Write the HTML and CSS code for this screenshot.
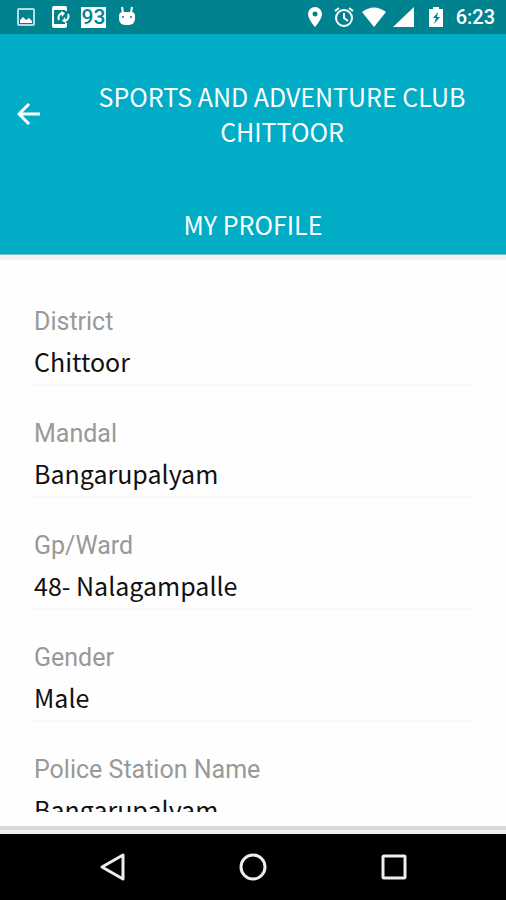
FILE: index.html
```html
<!DOCTYPE html>
<html lang="en">

<head>
<meta charset="utf-8">
<meta name="viewport" content="width=device-width, initial-scale=1">
<title>My Profile</title>
<link rel="stylesheet" href="styles.css">
</head>

<body>

<div class="status-bar">
  <div class="notifications">
    <svg class="image" width="20" height="20" viewBox="0 0 20 20">
      <rect x="2" y="2" width="16" height="16" rx="1" fill="none" stroke="#b5dce0" stroke-width="2"/>
      <path d="M4 16v-3l3-3 3 3 3-2 3 3v2z" fill="#fff"/>
    </svg>
    <svg width="20" height="24" viewBox="0 0 20 24">
      <path d="M16 6V3a1 1 0 0 0-1-1H4a1 1 0 0 0-1 1v18a1 1 0 0 0 1 1h11a1 1 0 0 0 1-1v-3" fill="none" stroke="#fff" stroke-width="2"/>
      <path d="M3 2h13v3H3zM3 19h13v3H3z" fill="#fff"/>
      <path d="M9 15a5 5 0 0 1 3-7M18 9a5 5 0 0 1-3 7" fill="none" stroke="#fff" stroke-width="2"/>
      <path d="M11 6l4 2-3 4zM16 18l-4-2 3-4z" fill="#fff"/>
    </svg>
    <span class="count">93</span>
    <svg width="20" height="24" viewBox="0 0 20 24">
      <path d="M5 2l1 6M15 2l-1 6" stroke="#fff" stroke-width="2"/>
      <path d="M2 11a4 4 0 0 1 4-4h8a4 4 0 0 1 4 4v3a6 6 0 0 1-6 6H8a6 6 0 0 1-6-6z" fill="#fff"/>
      <circle cx="6" cy="12" r="1" fill="#00838f"/>
      <circle cx="14" cy="12" r="1" fill="#00838f"/>
    </svg>
  </div>
  <div class="system">
    <svg class="pin" width="16" height="20" viewBox="0 0 16 20">
      <path fill-rule="evenodd" d="M8 0a7 7 0 0 0-7 7c0 5 7 13 7 13s7-8 7-13a7 7 0 0 0-7-7zm0 4.500a2.500 2.500 0 1 1 0 5 2.500 2.500 0 0 1 0-5z" fill="#fff"/>
    </svg>
    <svg class="alarm" width="22" height="22" viewBox="0 0 22 22">
      <circle cx="11" cy="12" r="8" fill="none" stroke="#fff" stroke-width="2"/>
      <path d="M11 7v5l4 3M2 5l4-3M20 5l-4-3" fill="none" stroke="#fff" stroke-width="2"/>
    </svg>
    <svg class="wifi" width="26" height="20" viewBox="0 0 26 20">
      <path d="M1 5Q13-4 25 5L13 20z" fill="#fff"/>
    </svg>
    <svg class="signal" width="22" height="20" viewBox="0 0 22 20">
      <path d="M21 0v20H0z" fill="#fff"/>
    </svg>
    <svg class="battery" width="14" height="20" viewBox="0 0 14 20">
      <path d="M4 0h6v2h4v18H0V2h4z" fill="#fff"/>
      <path d="M9 5l-5 6h3l-2 6 6-7H8z" fill="#00838f"/>
    </svg>
    <span class="clock">6:23</span>
  </div>
</div>

<header class="app-header">
  <div class="title-row">
    <button class="back" type="button" aria-label="Back">
      <svg width="24" height="22" viewBox="0 0 24 22">
        <path d="M23 11H2M12 1L2 11l10 10" fill="none" stroke="#fff" stroke-width="3"/>
      </svg>
    </button>
    <h1>SPORTS AND ADVENTURE CLUB CHITTOOR</h1>
  </div>
  <h2>MY PROFILE</h2>
</header>

<main class="profile">
  <dl class="fields">
    <div class="field">
      <dt>District</dt>
      <dd>Chittoor</dd>
    </div>
    <div class="field">
      <dt>Mandal</dt>
      <dd>Bangarupalyam</dd>
    </div>
    <div class="field">
      <dt>Gp/Ward</dt>
      <dd>48- Nalagampalle</dd>
    </div>
    <div class="field">
      <dt>Gender</dt>
      <dd>Male</dd>
    </div>
    <div class="field">
      <dt>Police Station Name</dt>
      <dd>Bangarupalyam</dd>
    </div>
  </dl>
</main>

<nav class="nav-bar">
  <button type="button" aria-label="Back">
    <svg width="28" height="28" viewBox="0 0 28 28">
      <path d="M25 2v24L4 14z" fill="none" stroke="#eee" stroke-width="3" stroke-linejoin="round"/>
    </svg>
  </button>
  <button type="button" aria-label="Home">
    <svg width="28" height="28" viewBox="0 0 28 28">
      <circle cx="14" cy="14" r="12" fill="none" stroke="#eee" stroke-width="3"/>
    </svg>
  </button>
  <button type="button" aria-label="Recent apps">
    <svg width="28" height="28" viewBox="0 0 28 28">
      <rect x="3" y="3" width="22" height="22" rx="1" fill="none" stroke="#eee" stroke-width="3"/>
    </svg>
  </button>
</nav>

</body>
</html>
```
FILE: styles.css
```css
* {
	box-sizing: border-box;
}

body {
	margin: 0;
	height: 100vh;
	display: flex;
	flex-direction: column;
	background: #fefefe;
	font-family: "Noto Sans CJK SC", sans-serif;
	font-size: 25px;
}

h1, h2, dl, dd {
	margin: 0;
	font-size: 25px;
	font-weight: 400;
}

button {
	padding: 0;
	border: 0;
	background: none;
}

svg {
	display: block;
}

.status-bar {
	flex: none;
	height: 34px;
	padding: 0 11px 0 16px;
	display: flex;
	justify-content: space-between;
	align-items: center;
	background: #00838f;
	color: #fff;
	font-family: Roboto, sans-serif;
}

.notifications, .system {
	display: flex;
	align-items: center;
}

.notifications {
	gap: 11px;
}

.image {
	margin-right: 3px;
}

.system {
	gap: 6px;
}

.pin {
	margin-right: 4px;
}

.battery {
	margin: 0 7px 0 8px;
}

.count {
	width: 25px;
	background: #fff;
	color: #00838f;
	font-size: 21px;
	line-height: 21px;
	font-weight: 500;
	text-align: center;
}

.clock {
	font-size: 20px;
	font-weight: 500;
}

.app-header {
	flex: none;
	background: #00acc6;
	color: #fff;
	text-align: center;
	border-bottom: 1px solid #7fbfca;
}

.title-row {
	display: flex;
	align-items: center;
	padding: 45px 0;
}

.title-row h1 {
	flex: 1;
	padding: 0 28px 0 45px;
	line-height: 35px;
}

.back {
	margin-left: 17px;
}

.app-header h2 {
	line-height: 36px;
	padding: 12px 0;
}

.profile {
	flex: 1;
	min-height: 0;
	padding: 0 34px 14px;
	border-top: 5px solid #f1f1f1;
	border-bottom: 4px solid #d8d8d8;
}

.fields {
	height: 100%;
	padding-top: 14px;
	overflow: hidden;
}

.field {
	height: 112px;
	padding-top: 32px;
	border-bottom: 2px solid #f8f8f8;
}

.field dt {
	color: #999;
	font-family: Roboto, sans-serif;
	line-height: 32px;
}

.field dd {
	color: #111;
	line-height: 46px;
}

.nav-bar {
	flex: none;
	height: 70px;
	padding: 0 98px;
	display: flex;
	justify-content: space-between;
	align-items: center;
	background: #000;
	border-top: 4px solid #eee;
}
```
